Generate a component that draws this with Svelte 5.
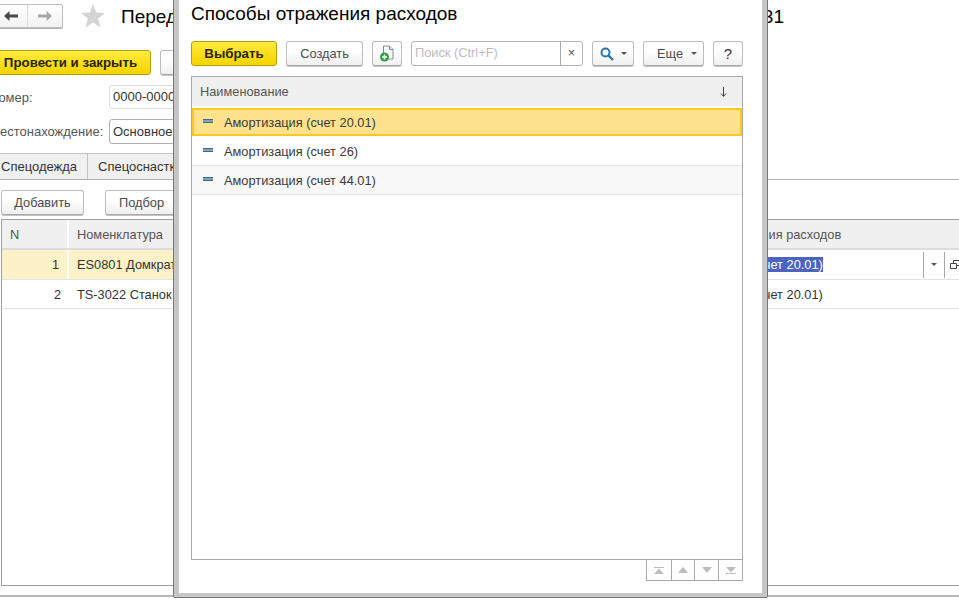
<script>
  const rows = [
    { n: 1, name: 'ES0801 Домкрат гидравлический', active: true },
    { n: 2, name: 'TS-3022 Станок токарный', active: false }
  ];
  const ways = ['Амортизация (счет 20.01)', 'Амортизация (счет 26)', 'Амортизация (счет 44.01)'];
</script>

<div class="page">
  <div class="top">
    <div class="nav">
      <span class="nav-cell back">
        <svg width="14" height="12" viewBox="0 0 14 12"><path d="M0 6l5.500-5v3.500H14v3H5.500V11z" fill="#4a4a4a" /></svg>
      </span>
      <span class="nav-cell">
        <svg width="14" height="12" viewBox="0 0 14 12"><path d="M14 6L8.500 1v3.500H0v3h8.500V11z" fill="#a8a8a8" /></svg>
      </span>
    </div>
    <svg class="star" width="24" height="24" viewBox="0 0 24 24"><path d="M12 0l3.200 8.600 8.800.4-6.900 5.600 2.400 8.900L12 18.400l-7.500 5.100 2.400-8.900L0 9l8.800-.4z" fill="#d4d4d4" /></svg>
    <h1 class="doc-title"><span>Передача материалов</span><span>000031</span></h1>
  </div>

  <div class="commands">
    <button class="btn yellow wide">Провести и закрыть</button>
    <button class="btn">Записать</button>
  </div>

  <div class="field num">
    <span class="label">Номер:</span>
    <span class="input light">0000-000001</span>
  </div>
  <div class="field place">
    <span class="label">Местонахождение:</span>
    <span class="input">Основное подразделение</span>
  </div>

  <div class="tabs">
    <span class="tab">Спецодежда</span>
    <span class="tab">Спецоснастка</span>
  </div>

  <div class="sub-bar">
    <button class="btn add">Добавить</button>
    <button class="btn pick">Подбор</button>
  </div>

  <div class="grid-box">
    <div class="grid-row head">
      <span class="c-n">N</span>
      <span class="c-name">Номенклатура</span>
      <span class="c-way">Способ отражения расходов</span>
    </div>
    {#each rows as row}
      <div class="grid-row" class:active={row.active}>
        <span class="c-n num-cell">{row.n}</span>
        <span class="c-name">{row.name}</span>
        <span class="c-way">
          {#if row.active}
            <span class="editor">
              <span class="sel"><span class="sel-text">Амортизация (счет 20.01)</span></span>
              <span class="ed-btn drop"><i class="tri"></i></span>
              <span class="ed-btn open">
                <svg width="10" height="10" viewBox="0 0 10 10"><path d="M3.500 3V.5h6v5H7M.5 3.500h6v5h-6z" fill="none" stroke="#444" /></svg>
              </span>
            </span>
          {:else}
            Амортизация (счет 20.01)
          {/if}
        </span>
      </div>
    {/each}
  </div>
  <div class="page-end"></div>

  <div class="modal">
    <h2>Способы отражения расходов</h2>
    <div class="toolbar">
      <button class="btn yellow choose">Выбрать</button>
      <button class="btn create">Создать</button>
      <button class="btn icon-btn">
        <svg width="16" height="17" viewBox="0 0 16 17">
          <path d="M4.500 1h6l3.500 3.500V14h-9.500z" fill="#fbfbfb" stroke="#7d8ba0" />
          <path d="M10.500 1v3.500H14" fill="#dfe6ee" stroke="#7d8ba0" />
          <circle cx="5.500" cy="12" r="4.500" fill="#2f9e41" />
          <path d="M3 12h5M5.500 9.500v5" stroke="#fff" stroke-width="1.500" />
        </svg>
      </button>
      <div class="search">
        <span class="search-text">Поиск (Ctrl+F)</span>
        <span class="search-x">×</span>
      </div>
      <button class="btn find">
        <svg width="14" height="14" viewBox="0 0 14 14">
          <circle cx="5.500" cy="5.500" r="4" fill="none" stroke="#2a77ad" stroke-width="2" />
          <path d="M8.500 8.500l4.500 4.500" stroke="#2a77ad" stroke-width="2.400" />
        </svg>
        <i class="tri"></i>
      </button>
      <button class="btn more">Еще <i class="tri"></i></button>
      <button class="btn help">?</button>
    </div>

    <div class="list">
      <div class="list-head">
        <span>Наименование</span>
        <svg width="7" height="10" viewBox="0 0 7 10"><path d="M3.500 0v9M1 6.500l2.500 3 2.500-3" fill="none" stroke="#444" /></svg>
      </div>
      {#each ways as way, i}
        <div class="list-row" class:current={i === 0} class:odd={i === 2}>
          <i class="item-icon"></i>
          <span>{way}</span>
        </div>
      {/each}
    </div>

    <div class="pager">
      <span class="pg"><svg width="10" height="7" viewBox="0 0 10 7"><path d="M0 0h10v1H0zM5 1.500L10 7H0z" fill="#bdbdbd" /></svg></span>
      <span class="pg"><svg width="10" height="6" viewBox="0 0 10 6"><path d="M5 0l5 6H0z" fill="#bdbdbd" /></svg></span>
      <span class="pg"><svg width="10" height="6" viewBox="0 0 10 6"><path d="M5 6L0 0h10z" fill="#bdbdbd" /></svg></span>
      <span class="pg"><svg width="10" height="7" viewBox="0 0 10 7"><path d="M5 5.500L0 0h10zM0 6h10v1H0z" fill="#bdbdbd" /></svg></span>
    </div>
  </div>
</div>

<style>
  :global(body) {
    margin: 0;
    background: #fff;
  }

  .page {
    position: relative;
    width: 959px;
    height: 600px;
    overflow: hidden;
    background: #fff;
    color: #333;
    font-family: "Liberation Sans", Arial, sans-serif;
    font-size: 12.800px;
  }

  /* background form */
  .top {
    display: flex;
    align-items: center;
    height: 25px;
    padding-top: 3px;
  }

  .nav {
    display: flex;
    flex: none;
    width: 70px;
    height: 24px;
    margin-left: -7px;
    border: 1px solid #bdbdbd;
    border-radius: 2px;
    box-sizing: border-box;
    background: linear-gradient(#fff, #f2f2f2);
    box-shadow: 0 1px 0 #b5b5b5;
  }

  .nav-cell {
    flex: 1;
    display: flex;
    align-items: center;
    justify-content: center;
  }

  .nav-cell.back {
    flex: none;
    width: 33px;
  }

  .nav-cell + .nav-cell {
    border-left: 1px solid #ddd;
  }

  .star {
    flex: none;
    margin-left: 18px;
  }

  .doc-title {
    display: flex;
    justify-content: space-between;
    width: 663px;
    margin: 2px 0 0 16px;
    color: #000;
    font-size: 19px;
    font-weight: 400;
  }

  .btn {
    display: inline-flex;
    align-items: center;
    justify-content: center;
    height: 25px;
    padding: 0;
    border: 1px solid #bdbdbd;
    border-bottom-color: #a8a8a8;
    border-radius: 3px;
    box-sizing: border-box;
    background: linear-gradient(#fff 40%, #efefef);
    box-shadow: 0 1px 0 #c4c4c4;
    color: #4b4b4b;
    font-family: inherit;
    font-size: 12.800px;
  }

  .yellow {
    border-color: #b59e08;
    background: linear-gradient(#ffeb3c, #f6d300);
    box-shadow: none;
    color: #2b2400;
    font-size: 13.300px;
    font-weight: 700;
  }

  .commands {
    display: flex;
    gap: 9px;
    margin: 22px 0 0 -10px;
  }

  .wide {
    width: 161px;
  }

  .commands .btn:not(.wide) {
    width: 90px;
  }

  .field {
    display: flex;
    align-items: center;
  }

  .num {
    margin-top: 10px;
    height: 24px;
  }

  .place {
    margin-top: 10px;
    height: 25px;
  }

  .label {
    flex: none;
    width: 120px;
    margin-left: -11px;
    white-space: nowrap;
    color: #555;
    font-size: 13px;
  }

  .input {
    display: block;
    width: 200px;
    height: 100%;
    padding-left: 3px;
    font-size: 13px;
    line-height: 24px;
    border: 1px solid #b0b0b0;
    border-radius: 3px;
    box-sizing: border-box;
    white-space: nowrap;
  }

  .input.light {
    line-height: 22px;
    border-color: #ddd;
  }

  .tabs {
    display: flex;
    margin-top: 9px;
    height: 27px;
    border-bottom: 1px solid #b0b0b0;
    box-sizing: border-box;
    width: 959px;
    font-size: 13px;
  }

  .tab {
    padding: 0 10px 0 1px;
    line-height: 26px;
    background: #f0f0f0;
    border-top: 1px solid #c4c4c4;
    box-sizing: border-box;
    height: 26px;
    white-space: nowrap;
  }

  .tab:first-child {
    width: 88px;
    border-right: 1px solid #c4c4c4;
  }

  .tab + .tab {
    width: 120px;
    padding-left: 10px;
  }

  .sub-bar {
    display: flex;
    gap: 21px;
    margin: 10px 0 0 1px;
  }

  .add {
    width: 83px;
  }

  .pick {
    width: 73px;
  }

  .grid-box {
    margin: 4px 0 0 1px;
    height: 367px;
    border: 1px solid #a0a0a0;
    border-right: 0;
    box-sizing: border-box;
  }

  .grid-row {
    display: grid;
    grid-template-columns: 67px 594px 1fr;
    height: 29px;
    border-bottom: 1px solid #e4e4e4;
    align-items: center;
    white-space: nowrap;
  }

  .grid-row:last-child {
    height: 28px;
  }

  .grid-row > span {
    height: 100%;
    line-height: 29px;
    padding: 0 8px;
    box-sizing: border-box;
    overflow: hidden;
  }

  .head {
    height: 28px;
    background: #f0f0f0;
    border-bottom: 2px solid #dcdcdc;
    color: #555;
  }

  .head .c-n {
    border-right: 2px solid #fff;
  }

  .active .c-n,
  .active .c-name {
    background: #fdf1c8;
  }

  .active .c-n {
    border-right: 2px solid #fff;
  }

  .num-cell {
    text-align: right;
  }

  .grid-row > .c-way {
    padding: 0 0 0 8px;
  }

  .editor {
    display: flex;
    height: 100%;
    align-items: center;
  }

  .sel {
    display: block;
    flex: none;
    width: 252px;
    line-height: 15px;
  }

  .sel-text {
    background: #4a64c0;
    color: #fff;
  }

  .ed-btn {
    display: flex;
    flex: none;
    align-items: center;
    justify-content: center;
    height: 26px;
    border-left: 1px solid #a8a8a8;
    box-sizing: border-box;
  }

  .drop {
    width: 21px;
  }

  .open {
    width: 16px;
    padding-left: 5px;
    justify-content: flex-start;
  }

  .page-end {
    margin-top: 9px;
    border-top: 2px solid #b8b8b8;
  }

  .tri {
    display: inline-block;
    width: 0;
    height: 0;
    border: 3px solid transparent;
    border-top: 3px solid #555;
    border-bottom: 0;
  }

  /* selection form */
  .modal {
    position: absolute;
    left: 174px;
    top: 0;
    width: 593px;
    height: 597px;
    padding: 0 19px 0 12px;
    border: solid #c6c6c6;
    border-width: 0 5px 4px;
    box-sizing: border-box;
    background: #fff;
    box-shadow: -1px 0 0 #777, 1px 0 0 #777, 0 1px 0 #777;
    display: flex;
    flex-direction: column;
  }

  h2 {
    margin: 3px 0 0;
    height: 38px;
    color: #000;
    font-size: 19px;
    font-weight: 400;
    line-height: 22px;
    flex: none;
  }

  .toolbar {
    display: flex;
    flex: none;
    gap: 9px;
  }

  .choose {
    width: 86px;
  }

  .create {
    width: 77px;
  }

  .icon-btn {
    width: 30px;
  }

  .search {
    display: flex;
    width: 172px;
    height: 25px;
    border: 1px solid #b4b4b4;
    border-radius: 3px;
    box-sizing: border-box;
  }

  .search-text {
    flex: 1;
    padding-left: 3px;
    line-height: 22px;
    color: #bcbcbc;
  }

  .search-x {
    width: 21px;
    border-left: 1px solid #a8a8a8;
    text-align: center;
    line-height: 22px;
    color: #555;
  }

  .find {
    width: 42px;
    gap: 7px;
  }

  .more {
    width: 61px;
    padding-left: 7px;
    gap: 8px;
  }

  .help {
    width: 30px;
    font-size: 15px;
    color: #333;
  }

  .list {
    flex: none;
    margin-top: 10px;
    height: 484px;
    border: 1px solid #a8a8a8;
    box-sizing: border-box;
  }

  .list-head {
    display: flex;
    align-items: center;
    justify-content: space-between;
    height: 29px;
    padding: 0 15px 0 8px;
    background: #f0f0f0;
    color: #555;
  }

  .list-row {
    display: flex;
    align-items: center;
    gap: 11px;
    height: 29px;
    padding-left: 11px;
    border-bottom: 1px solid #e4e4e4;
    box-sizing: border-box;
    color: #3a3a3a;
  }

  .list-row.current {
    margin: 2px 0 1px;
    height: 28px;
    padding-left: 9px;
    border: 2px solid #fbc91f;
    background: #ffe28d;
  }

  .odd {
    background: #f8f8f8;
  }

  .item-icon {
    display: block;
    width: 10px;
    height: 2px;
    margin-bottom: 3px;
    border: solid #4f6478;
    border-width: 1px 0;
    background: #7fa3c4;
  }

  .pager {
    display: flex;
    flex: none;
    align-self: flex-end;
    margin-top: -1px;
    width: 97px;
    height: 22px;
    border: 1px solid #a8a8a8;
    box-sizing: border-box;
  }

  .pg {
    display: flex;
    align-items: center;
    justify-content: center;
    width: 24px;
    box-sizing: border-box;
  }

  .pg + .pg {
    border-left: 1px solid #a8a8a8;
  }
</style>
